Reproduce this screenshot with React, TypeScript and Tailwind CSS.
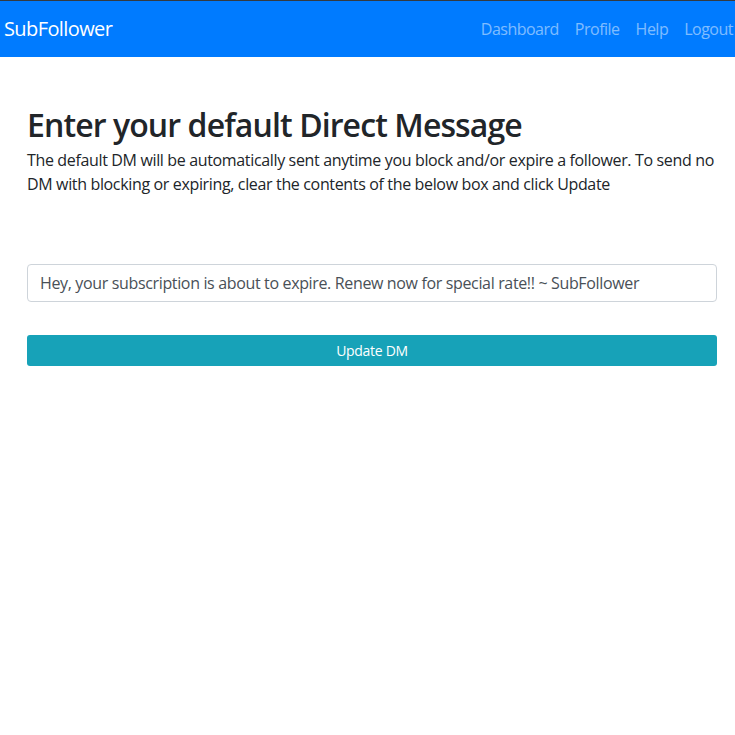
import { useState } from "react";

const font = { fontFamily: '"Open Sans", "Noto Sans", "Liberation Sans", sans-serif' };

function NavBar() {
  const links = ["Dashboard", "Profile", "Help", "Logout"];
  return (
    <nav className="flex h-[57px] items-center justify-between border-t border-[#343a40] bg-[#007bff] pl-[4px]">
      <a className="text-[20px] leading-[30px] tracking-[-0.6px] text-white" href="#">
        SubFollower
      </a>
      <ul className="-mr-[6px] flex items-center">
        {links.map((label) => (
          <li key={label}>
            <a className="block px-[8px] py-[8px] text-[16px] leading-[24px] tracking-[-0.5px] text-white/50" href="#">
              {label}
            </a>
          </li>
        ))}
      </ul>
    </nav>
  );
}

export default function App() {
  const [message, setMessage] = useState(
    "Hey, your subscription is about to expire. Renew now for special rate!! ~ SubFollower"
  );

  return (
    <div className="min-h-screen bg-white text-[#212529]" style={font}>
      <NavBar />
      <main className="pl-[27px] pr-[18px] pt-[49px]">
        <h1 className="mb-[4px] text-[32px] font-semibold leading-[38px] tracking-[-0.9px]">
          Enter your default Direct Message
        </h1>
        <p className="text-[16px] leading-[24px] tracking-[-0.35px]">
          The default DM will be automatically sent anytime you block and/or expire a follower. To send no DM
          with blocking or expiring, clear the contents of the below box and click Update
        </p>
        <form className="mt-[68px]" onSubmit={(event) => event.preventDefault()}>
          <input
            className="block h-[38px] w-full rounded-[4px] border border-[#ced4da] px-[12px] text-[16px] tracking-[-0.35px] text-[#495057] outline-none"
            value={message}
            onChange={(event) => setMessage(event.target.value)}
          />
          <button
            type="submit"
            className="mt-[33px] block h-[31px] w-full rounded-[3px] bg-[#17a2b8] text-[14px] tracking-[-0.3px] text-white"
          >
            Update DM
          </button>
        </form>
      </main>
    </div>
  );
}
